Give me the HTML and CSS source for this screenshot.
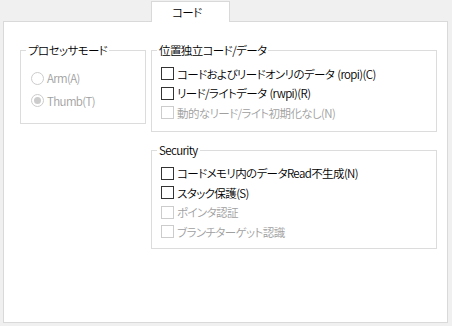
FILE: index.html
```html
<!DOCTYPE html>
<html>
	<head>
		<title>コード</title>
		<meta charset="UTF-8">
		<link rel="stylesheet" href="styles.css">
	</head>
	<body>
		<div class="tabs">
			<div class="tab active">コード</div>
		</div>
		<div class="panel">
			<div class="group mode">
				<div class="legend">プロセッサモード</div>
				<div class="radios">
					<div class="row disabled"><span class="radio"></span><span class="label">Arm(A)</span></div>
					<div class="row disabled"><span class="radio checked"></span><span class="label">Thumb(T)</span></div>
				</div>
			</div>
			<div class="column">
				<div class="group">
					<div class="legend">位置独立コード/データ</div>
					<div class="checks">
						<div class="row"><span class="box"></span><span class="label">コードおよびリードオンリのデータ (ropi)(C)</span></div>
						<div class="row"><span class="box"></span><span class="label">リード/ライトデータ (rwpi)(R)</span></div>
						<div class="row disabled"><span class="box"></span><span class="label">動的なリード/ライト初期化なし(N)</span></div>
					</div>
				</div>
				<div class="group security">
					<div class="legend">Security</div>
					<div class="checks">
						<div class="row"><span class="box"></span><span class="label">コードメモリ内のデータRead不生成(N)</span></div>
						<div class="row"><span class="box"></span><span class="label">スタック保護(S)</span></div>
						<div class="row disabled"><span class="box"></span><span class="label">ポインタ認証</span></div>
						<div class="row disabled"><span class="box"></span><span class="label">ブランチターゲット認識</span></div>
					</div>
				</div>
			</div>
		</div>
	</body>
</html>
```

FILE: styles.css
```css
/*Page*/
body{
	margin: 0;
	background: #f0f0f0;
	color: #000;
	font-family: "Noto Sans CJK JP", sans-serif;
	font-size: 11.5px;
	font-weight: 350;
	letter-spacing: -0.6px;
	word-spacing: 1px;
	font-feature-settings: "palt";
}

/*Tabs*/
.tabs{
	display: flex;
	padding: 1px 0 0 151px;
	position: relative;
	z-index: 1;
}
.tab{
	width: 57px;
	height: 20px;
	padding-left: 20px;
	line-height: 20px;
	border: 1px solid #d9d9d9;
	border-bottom: none;
	background: #fff;
}
.panel{
	margin: -1px 4px 0 3px;
	height: 272px;
	padding: 28px 0 0 16px;
	border: 1px solid #d9d9d9;
	background: #fff;
	display: flex;
	gap: 5px;
	align-items: flex-start;
}

/*Groups*/
.group{
	border: 1px solid #dcdcdc;
}
.legend{
	display: table;
	height: 16px;
	line-height: 16px;
	margin: -9px 0 0 5px;
	padding: 0 2px;
	background: #fff;
}
.mode{
	width: 124px;
}
.column{
	width: 286px;
}
.security{
	margin-top: 18px;
}
.radios{
	padding: 9px 0 11px 10px;
}
.radios .row{
	height: 22.5px;
}
.checks{
	padding: 6px 0 8px 9px;
}
.security .checks{
	padding-bottom: 6px;
}
.checks .row{
	height: 19.5px;
}
.row{
	display: flex;
	align-items: center;
}
.label{
	margin-left: 3px;
	white-space: nowrap;
}
.disabled{
	color: #a0a0a0;
}

/*Controls*/
.box{
	width: 11px;
	height: 11px;
	border: 1px solid #333;
	background: #fff;
	flex: none;
}
.disabled .box{
	border-color: #cccccc;
}
.radio{
	width: 11px;
	height: 11px;
	border: 1px solid #333;
	border-radius: 50%;
	flex: none;
	display: flex;
	align-items: center;
	justify-content: center;
}
.disabled .radio{
	border-color: #cccccc;
}
.radio.checked::after{
	content: "";
	width: 7px;
	height: 7px;
	border-radius: 50%;
	background: #cccccc;
}
```
